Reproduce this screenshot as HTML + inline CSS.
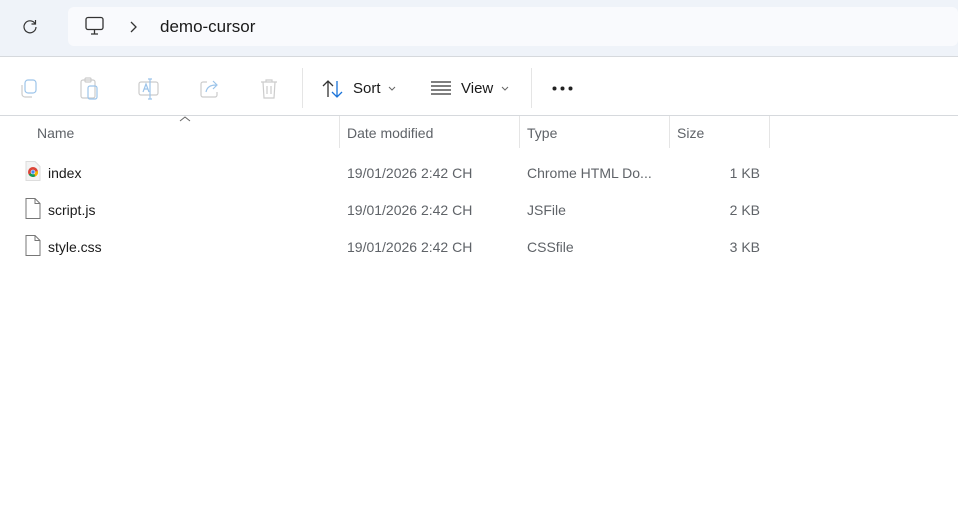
<!DOCTYPE html>
<html><head><meta charset="utf-8"><style>
*{margin:0;padding:0;box-sizing:border-box}
body{width:958px;height:525px;background:#fff;font-family:"Liberation Sans",sans-serif;position:relative;overflow:hidden;color:#1a1a1a}
.top{position:absolute;left:0;top:0;width:958px;height:57px;background:#eff3f9;border-bottom:1px solid #d6d9dd}
.addr{position:absolute;left:68px;top:7px;width:890px;height:39px;background:#f9fafd;border-radius:6px}
.abs{position:absolute}
.t{position:absolute;font-size:14px;white-space:nowrap}
.hdr{position:absolute;top:115px;left:0;width:958px;height:1px;background:#d6d9dd}
.g{color:#5f6368}
.vs{position:absolute;background:#e5e5e5;width:1px}
</style></head><body>
<div class="top"></div>
<div class="addr"></div>
<svg class="abs" style="left:21px;top:18px" width="18" height="18" viewBox="0 0 18 18" fill="none" stroke="#333" stroke-width="1.2"><path d="M14 5.5A6 6 0 1 0 15 9"/><path d="M14.5 2v4h-4"/></svg>
<svg class="abs" style="left:84px;top:16px" width="22" height="20" viewBox="0 0 22 20" fill="none" stroke="#333" stroke-width="1.3"><rect x="2" y="1.5" width="17" height="12" rx="2"/><path d="M7 18h7M10.5 13.5v4"/></svg>
<svg class="abs" style="left:128px;top:21px" width="10" height="12" viewBox="0 0 10 12" fill="none" stroke="#333" stroke-width="1.3"><path d="M3 1l5 5-5 5"/></svg>
<div class="t" style="left:160px;top:17px;font-size:17px;color:#1a1a1a">demo-cursor</div>

<svg class="abs" style="left:18px;top:78px" width="22" height="22" viewBox="0 0 22 22" fill="none" stroke="#bcd3ea" stroke-width="1.2"><rect x="7" y="2" width="11" height="13" rx="3" stroke="#9cc4ea"/><path d="M4 7v9a3 3 0 0 0 3 3h7" stroke="#ccc"/></svg>
<svg class="abs" style="left:78px;top:77px" width="22" height="24" viewBox="0 0 22 24" fill="none" stroke="#ccc" stroke-width="1.2"><rect x="3" y="3" width="14" height="18" rx="2"/><rect x="7" y="1" width="6" height="4" rx="1"/><rect x="10" y="9" width="9" height="13" rx="2" stroke="#9cc4ea"/></svg>
<svg class="abs" style="left:137px;top:77px" width="24" height="24" viewBox="0 0 24 24" fill="none" stroke="#ccc" stroke-width="1.2"><rect x="2" y="5" width="19" height="13" rx="2"/><path d="M13 2v20M11 2h4M11 22h4" stroke="#9cc4ea"/><path d="M6 15l3-8 3 8M7 12h4" stroke="#9cc4ea"/></svg>
<svg class="abs" style="left:198px;top:77px" width="24" height="24" viewBox="0 0 24 24" fill="none" stroke="#ccc" stroke-width="1.2"><path d="M9 5H5a2 2 0 0 0-2 2v11a2 2 0 0 0 2 2h12a2 2 0 0 0 2-2v-3"/><path d="M8 15c1-5 5-7 10-7M15 4l4 4-4 4" stroke="#9cc4ea"/></svg>
<svg class="abs" style="left:258px;top:77px" width="22" height="24" viewBox="0 0 22 24" fill="none" stroke="#ccc" stroke-width="1.2"><path d="M3 5h16M8 5V3h6v2M5 5l1 16h10l1-16M9 9v8M13 9v8"/></svg>
<div class="vs" style="left:302px;top:68px;height:40px"></div>
<svg class="abs" style="left:322px;top:79px" width="22" height="20" viewBox="0 0 22 20" fill="none" stroke-width="1.3"><path d="M6 18V2M1 7l5-5 5 5" stroke="#333"/><path d="M15 2v16M10 13l5 5 5-5" stroke="#1a73d9"/></svg>
<div class="t" style="left:353px;top:80px;font-size:15px">Sort</div>
<svg class="abs" style="left:388px;top:86px" width="8" height="5" viewBox="0 0 8 5" fill="none" stroke="#666"><path d="M1 1l3 3 3-3"/></svg>
<svg class="abs" style="left:430px;top:81px" width="22" height="14" viewBox="0 0 22 14" fill="none" stroke="#333" stroke-width="1.2"><path d="M1 1h20M1 5h20M1 9h20M1 13h20"/></svg>
<div class="t" style="left:461px;top:80px;font-size:15px">View</div>
<svg class="abs" style="left:501px;top:86px" width="8" height="5" viewBox="0 0 8 5" fill="none" stroke="#666"><path d="M1 1l3 3 3-3"/></svg>
<div class="vs" style="left:531px;top:68px;height:40px"></div>
<svg class="abs" style="left:552px;top:86px" width="22" height="5" viewBox="0 0 22 5" fill="#222"><circle cx="2.5" cy="2.5" r="2"/><circle cx="10.5" cy="2.5" r="2"/><circle cx="18.5" cy="2.5" r="2"/></svg>

<div class="hdr"></div>
<svg class="abs" style="left:179px;top:116px" width="12" height="6" viewBox="0 0 12 6" fill="none" stroke="#666"><path d="M1 5l5-4 5 4"/></svg>
<div class="t g" style="left:37px;top:125px">Name</div>
<div class="vs" style="left:339px;top:116px;height:32px"></div>
<div class="t g" style="left:347px;top:125px">Date modified</div>
<div class="vs" style="left:519px;top:116px;height:32px"></div>
<div class="t g" style="left:527px;top:125px">Type</div>
<div class="vs" style="left:669px;top:116px;height:32px"></div>
<div class="t g" style="left:677px;top:125px">Size</div>
<div class="vs" style="left:769px;top:116px;height:32px"></div>

<svg class="abs" style="left:25px;top:161px" width="16" height="20" viewBox="0 0 16 20"><path d="M1 .5h9l5 5v14H1z" fill="#f3f3f3" stroke="#ddd"/><circle cx="8" cy="11" r="5" fill="#db4437"/><path d="M8 11L3.7 13.5A5 5 0 0 0 10.5 15.3z" fill="#0f9d58"/><path d="M8 11l5-1a5 5 0 0 1-2.5 5.3z" fill="#f4b400"/><circle cx="8" cy="11" r="2.3" fill="#fff"/><circle cx="8" cy="11" r="1.7" fill="#4285f4"/></svg>
<div class="t" style="left:48px;top:165px">index</div>
<svg class="abs" style="left:25px;top:198px" width="16" height="21" viewBox="0 0 16 21" fill="#fff" stroke="#777"><path d="M1 .5h9l5 5v15H1z"/><path d="M10 .5v5h5" fill="none"/></svg>
<div class="t" style="left:48px;top:202px">script.js</div>
<svg class="abs" style="left:25px;top:235px" width="16" height="21" viewBox="0 0 16 21" fill="#fff" stroke="#777"><path d="M1 .5h9l5 5v15H1z"/><path d="M10 .5v5h5" fill="none"/></svg>
<div class="t" style="left:48px;top:239px">style.css</div>

<div class="t g" style="left:347px;top:165px">19/01/2026 2:42 CH</div>
<div class="t g" style="left:347px;top:202px">19/01/2026 2:42 CH</div>
<div class="t g" style="left:347px;top:239px">19/01/2026 2:42 CH</div>
<div class="t g" style="left:527px;top:165px">Chrome HTML Do...</div>
<div class="t g" style="left:527px;top:202px">JSFile</div>
<div class="t g" style="left:527px;top:239px">CSSfile</div>
<div class="t g" style="left:700px;top:165px;width:60px;text-align:right">1 KB</div>
<div class="t g" style="left:700px;top:202px;width:60px;text-align:right">2 KB</div>
<div class="t g" style="left:700px;top:239px;width:60px;text-align:right">3 KB</div>
</body></html>
